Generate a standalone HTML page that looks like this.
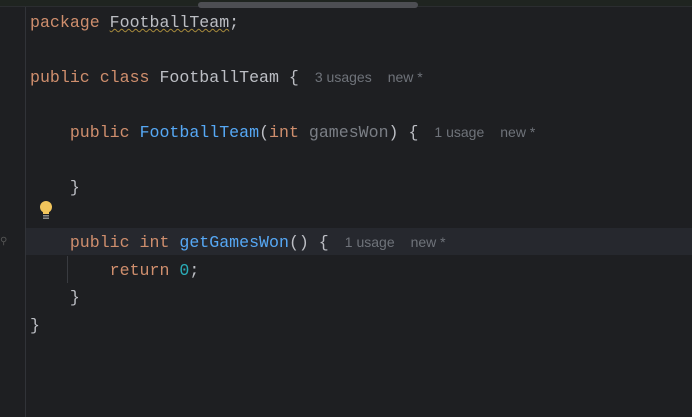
<!DOCTYPE html>
<html><head><style>
body{margin:0;width:692px;height:417px;background:#1e1f22;overflow:hidden;position:relative;font-family:"Liberation Mono",monospace;font-size:16.6px;}
.l{position:absolute;left:30px;height:27.5px;line-height:27.5px;white-space:pre;color:#bcbec4}
.k{color:#cf8e6d}.f{color:#56a8f5}.p{color:#7a7e85}.n{color:#2aacb8}
.h{font-family:"Liberation Sans",sans-serif;font-size:14px;color:#6f737a;margin-left:16px}
</style></head><body>
<div style="position:absolute;left:0;top:0;width:692px;height:6px;background:#1f2420"></div>
<div style="position:absolute;left:0;top:6px;width:692px;height:1px;background:#2b2d30"></div>
<div style="position:absolute;left:198px;top:2px;width:220px;height:6px;border-radius:3px;background:#4d4e53"></div>
<div style="position:absolute;left:25px;top:7px;width:1px;height:410px;background:#313338"></div>
<div style="position:absolute;left:26px;top:228px;width:666px;height:27px;background:#26282e"></div>
<div style="position:absolute;left:67px;top:256px;width:1px;height:27px;background:#393b40"></div>
<svg style="position:absolute;left:38px;top:200px" width="16" height="20"><circle cx="8" cy="7" r="6" fill="#f2c55c"/><rect x="5" y="11" width="6" height="3" fill="#f2c55c"/><rect x="5" y="15" width="6" height="1.5" fill="#8a8a8a"/><rect x="5" y="17.5" width="6" height="1.5" fill="#8a8a8a"/></svg>
<div style="position:absolute;left:0;top:236px;color:#555;font-size:10px">⚲</div>
<div class="l" style="top:9px"><span class="k">package </span><span style="text-decoration:underline wavy #a68a3c;text-decoration-thickness:1px">FootballTeam</span>;</div>
<div class="l" style="top:64px"><span class="k">public class </span>FootballTeam {<span class="h">3 usages</span><span class="h">new *</span></div>
<div class="l" style="top:119px">    <span class="k">public </span><span class="f">FootballTeam</span>(<span class="k">int </span><span class="p">gamesWon</span>) {<span class="h">1 usage</span><span class="h">new *</span></div>
<div class="l" style="top:174px">    }</div>
<div class="l" style="top:229px">    <span class="k">public int </span><span class="f">getGamesWon</span>() {<span class="h">1 usage</span><span class="h">new *</span></div>
<div class="l" style="top:257px">        <span class="k">return </span><span class="n">0</span>;</div>
<div class="l" style="top:284px">    }</div>
<div class="l" style="top:312px">}</div>
</body></html>
